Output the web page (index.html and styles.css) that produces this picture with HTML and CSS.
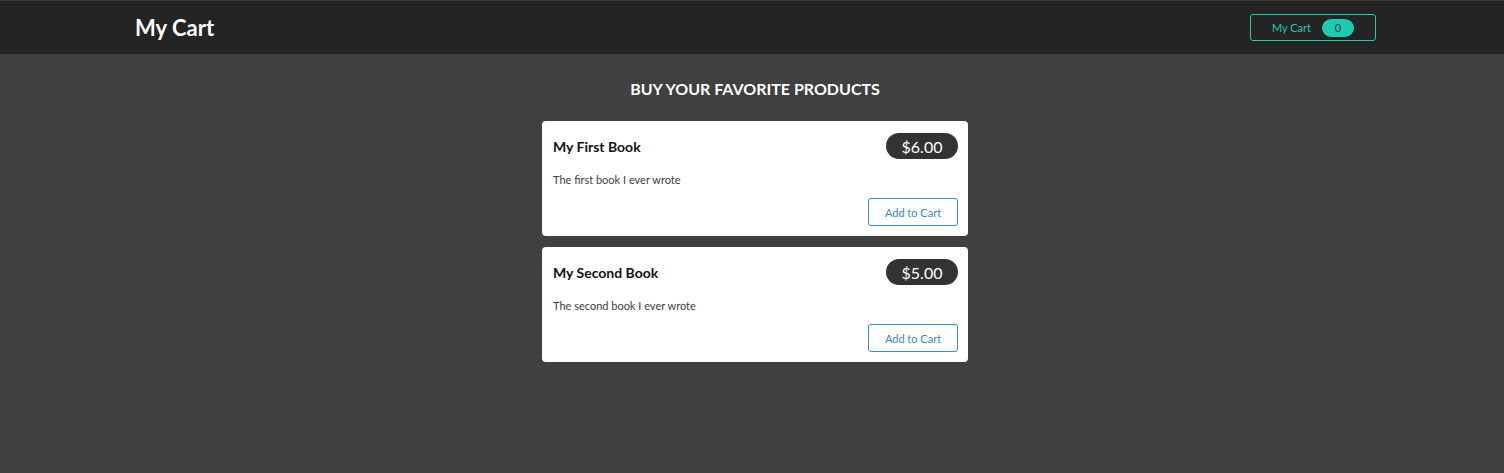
FILE: index.html
```html
<!DOCTYPE html>
<html lang="en">
<head>
<meta charset="utf-8">
<title>My Cart</title>
<link rel="stylesheet" href="styles.css">
</head>
<body>
<header class="topbar">
  <h1 class="brand">My Cart</h1>
  <button class="cart-btn">My Cart <span class="cart-count">0</span></button>
</header>
<main class="content">
  <h2 class="heading">BUY YOUR FAVORITE PRODUCTS</h2>
  <div class="products">
    <div class="card">
      <div class="card-top">
        <h3 class="card-title">My First Book</h3>
        <span class="price">$6.00</span>
      </div>
      <p class="desc">The first book I ever wrote</p>
      <div class="card-actions"><button class="add-btn">Add to Cart</button></div>
    </div>
    <div class="card">
      <div class="card-top">
        <h3 class="card-title">My Second Book</h3>
        <span class="price">$5.00</span>
      </div>
      <p class="desc">The second book I ever wrote</p>
      <div class="card-actions"><button class="add-btn">Add to Cart</button></div>
    </div>
  </div>
</main>
</body>
</html>
```
FILE: styles.css
```css
* { box-sizing: border-box; }
html, body { height: 100%; }
body {
  margin: 0;
  background: #404040;
  font-family: "Lato", "Open Sans", sans-serif;
  color: #fff;
}
.topbar {
  height: 54px;
  background: #242424;
  border-top: 1px solid #3a3a3a;
  display: flex;
  align-items: center;
  justify-content: space-between;
  padding: 0 128px 0 135px;
}
.brand {
  margin: 0;
  font-size: 22px;
  font-weight: 700;
  color: #fff;
}
.cart-btn {
  width: 126px;
  height: 27px;
  background: transparent;
  border: 1px solid #1ecbb0;
  border-radius: 3px;
  color: #1ecbb0;
  font-family: inherit;
  font-size: 11px;
  display: flex;
  align-items: center;
  justify-content: center;
  gap: 11px;
  padding: 0;
}
.cart-count {
  display: inline-flex;
  align-items: center;
  justify-content: center;
  width: 32px;
  height: 18px;
  border-radius: 9px;
  background: #1ecbb0;
  color: #1f3a35;
  font-size: 11px;
}
.content {
  display: flex;
  flex-direction: column;
  align-items: center;
  padding: 25px 0 0 6px;
}
.heading {
  margin: 0 0 22px;
  font-size: 16px;
  font-weight: 700;
  color: #fff;
  line-height: 20px;
}
.products {
  display: flex;
  flex-direction: column;
  gap: 11px;
  width: 426px;
}
.card {
  background: #fff;
  border-radius: 4px;
  height: 115px;
  padding: 12px 10px 10px 11px;
  color: #111;
}
.card-top {
  display: flex;
  justify-content: space-between;
  align-items: center;
  height: 26px;
}
.card-title {
  margin: 0;
  font-size: 14px;
  font-weight: 700;
  color: #111;
}
.price {
  display: inline-flex;
  align-items: center;
  justify-content: center;
  width: 72px;
  height: 26px;
  border-radius: 13px;
  background: #333;
  color: #fff;
  font-size: 16px;
}
.desc {
  margin: 14px 0 0;
  font-size: 11px;
  line-height: 14px;
  color: #3e3a4a;
}
.card-actions {
  display: flex;
  justify-content: flex-end;
  margin-top: 11px;
}
.add-btn {
  width: 90px;
  height: 28px;
  background: #fff;
  border: 1px solid #2b8fd6;
  border-radius: 3px;
  color: #3a86c8;
  font-family: inherit;
  font-size: 11px;
  padding: 0;
}
```
